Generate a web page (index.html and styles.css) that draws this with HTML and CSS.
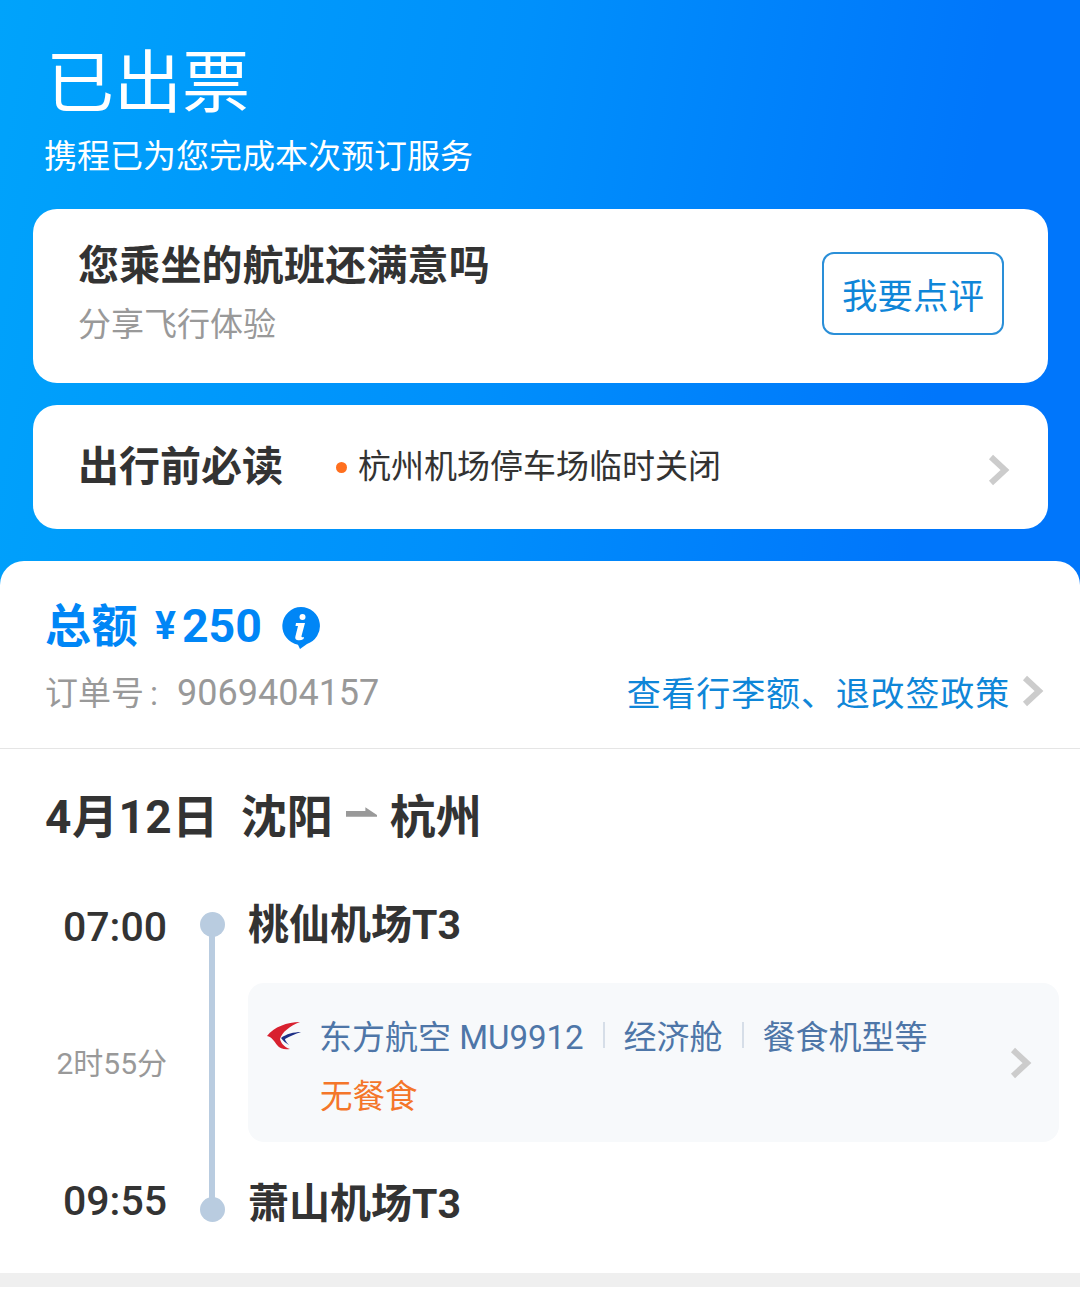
FILE: index.html
```html
<!DOCTYPE html>
<html lang="zh-CN">
<head>
<meta charset="utf-8">
<title>已出票</title>
<link rel="stylesheet" href="styles.css">
</head>
<body>
<header class="hero">
  <h1 class="hero-title">已出票</h1>
  <p class="hero-sub">携程已为您完成本次预订服务</p>
  <section class="card review">
    <div class="review-copy">
      <h2 class="review-title">您乘坐的航班还满意吗</h2>
      <p class="review-sub">分享飞行体验</p>
    </div>
    <button class="review-btn">我要点评</button>
  </section>
  <section class="card notice">
    <h2 class="notice-title">出行前必读</h2>
    <span class="notice-dot"></span>
    <span class="notice-text">杭州机场停车场临时关闭</span>
    <svg class="chev notice-chev" viewBox="0 0 22 32"><path d="M3 3l14 13L3 29"/></svg>
  </section>
</header>
<main class="sheet">
  <section class="summary">
    <div class="total">
      <span class="total-label">总额</span>
      <span class="total-yen">¥</span>
      <span class="total-num">250</span>
      <svg class="info" viewBox="0 0 38 42"><path class="info-bg" d="M19 0a19 19 0 0 1 6 37l-7 5-2-4.300A19 19 0 0 1 19 0z"/><circle class="info-fg" cx="20.500" cy="10" r="3"/><path class="info-fg" d="M14 16h9l-3.500 13q-.5 2 2.500 1l-.5 2q-3 2-6.500 1-2.500-1-1.500-4l2.500-10h-2.500z"/></svg>
    </div>
    <div class="order-row">
      <span class="order-no">订单号<span class="order-colon">:</span><span class="order-digits">9069404157</span></span>
      <span class="policy">查看行李额、退改签政策<svg class="chev policy-chev" viewBox="0 0 22 32"><path d="M3 3l14 13L3 29"/></svg></span>
    </div>
  </section>
  <section class="trip">
    <h2 class="trip-head">
      <span class="trip-date">4月12日</span><span class="route">沈阳</span>
      <svg class="route-arrow" viewBox="0 0 32 10"><path d="M0 4h20V0l12 8v2H0z"/></svg>
      <span>杭州</span>
    </h2>
    <div class="timeline">
      <div class="times">
        <span class="time">07:00</span>
        <span class="duration">2时55分</span>
        <span class="time">09:55</span>
      </div>
      <div class="rail"><i class="rail-dot"></i><i class="rail-line"></i><i class="rail-dot"></i></div>
      <div class="stops">
        <div class="airport">桃仙机场T3</div>
        <div class="flight">
          <svg class="logo" viewBox="0 0 34 28">
            <path fill="#d8212f" d="M33 0C20 0 7 5 0 14c5 1 7 5 10 9 3 4 8 5 13 4-6-2-9-6-10-10C15 10 23 4 33 0z"/>
            <path fill="#1d2f86" d="M34 10c-7 0-15 2-20 6 2 3 5 5 8 7-3-3-4-5-4-6 5-3 10-5 16-7z"/>
          </svg>
          <div class="flight-body">
            <div class="flight-line">
              <span>东方航空 MU9912</span><i class="sep"></i><span>经济舱</span><i class="sep"></i><span>餐食机型等</span>
            </div>
            <div class="meal">无餐食</div>
          </div>
          <svg class="chev flight-chev" viewBox="0 0 22 32"><path d="M3 3l14 13L3 29"/></svg>
        </div>
        <div class="airport">萧山机场T3</div>
      </div>
    </div>
  </section>
  <div class="divider"></div>
</main>
</body>
</html>
```

FILE: styles.css
```css
* { box-sizing: border-box; }
html, body { margin: 0; padding: 0; }
body {
  width: 1080px;
  height: 1303px;
  overflow: hidden;
  background: #fff;
  font-family: Roboto, "Noto Sans CJK SC", sans-serif;
  color: #333;
}
h1, h2, p { margin: 0; }

.hero {
  height: 590px;
  padding: 44px 32px 0 33px;
  background: linear-gradient(100deg, #00a3fb 0%, #0090fb 45%, #0076fb 85%, #0076fb 100%);
}
.hero-title {
  margin-left: 13px;
  font-size: 68px;
  line-height: 80px;
  font-weight: 400;
  color: #fff;
}
.hero-sub {
  margin: 11px 0 0 11px;
  font-size: 33px;
  line-height: 44px;
  color: #fff;
}
.card {
  width: 1015px;
  background: #fff;
  border-radius: 24px;
  display: flex;
  align-items: center;
}
.review {
  margin-top: 30px;
  height: 174px;
  padding: 0 44px 0 45px;
  justify-content: space-between;
}
.review-copy { margin-bottom: 8px; }
.review-title { font-size: 41px; letter-spacing: .2px; line-height: 56px; font-weight: 700; }
.review-sub { margin-top: 9px; font-size: 33px; line-height: 44px; color: #999; }
.review-btn {
  width: 182px;
  height: 83px;
  margin-bottom: 5px;
  padding: 0;
  background: #fff;
  border: 2px solid #2a8fd8;
  border-radius: 12px;
  color: #0f86d8;
  font: 35.500px/1 "Noto Sans CJK SC", sans-serif;
}
.notice {
  margin-top: 22px;
  height: 124px;
  padding: 0 38px 0 45px;
}
.notice-title { font-size: 41px; line-height: 56px; font-weight: 700; }
.notice-dot {
  width: 11px;
  height: 11px;
  margin: 0 11px 0 53px;
  border-radius: 50%;
  background: #ff6f1e;
}
.notice-text { font-size: 33px; line-height: 44px; color: #333; }
.chev { fill: none; stroke: #ccc; stroke-width: 6; flex: none; }
.notice-chev { width: 22px; height: 32px; margin-left: auto; margin-top: 6px; }

.sheet {
  margin-top: -29px;
  position: relative;
  background: #fff;
  border-radius: 24px 24px 0 0;
}
.summary {
  height: 188px;
  padding: 36px 36px 0 45px;
  border-bottom: 1px solid #e5e5e5;
}
.total {
  display: flex;
  align-items: center;
  height: 58px;
  color: #0086f6;
  font-weight: 700;
}
.total-label { font-size: 46px; letter-spacing: .5px; line-height: 58px; }
.total-yen { margin-left: 17px; font-size: 39px; }
.total-num { margin-left: 6px; font-size: 46.500px; }
.info { width: 38px; height: 42px; margin: 4px 0 0 20px; }
.info-bg { fill: #0086f6; }
.info-fg { fill: #fff; }
.order-row {
  display: flex;
  justify-content: space-between;
  align-items: center;
  margin-top: 14px;
  height: 44px;
}
.order-no { font-size: 33px; color: #999; }
.order-colon { margin-left: 6px; }
.order-digits { margin-left: 19px; font-size: 36px; }
.policy { display: flex; align-items: center; font-size: 34px; color: #0f86d8; letter-spacing: .85px; }
.policy-chev { width: 22px; height: 32px; margin-left: 12px; }

.trip { padding: 0 21px 0 45px; }
.trip-head {
  display: flex;
  align-items: center;
  margin-top: 36px;
  height: 56px;
  font-size: 46px;
  font-weight: 700;
}
.trip-date { letter-spacing: .5px; }
.route { margin-left: 22px; }
.route-arrow { width: 31px; height: 10px; margin: 0 13px; fill: #999; transform: translateY(-1px); }
.timeline {
  display: flex;
  margin-top: 63px;
}
.times {
  width: 122px;
  height: 320px;
  display: flex;
  flex-direction: column;
  justify-content: space-between;
  align-items: flex-end;
}
.time { font-size: 41px; line-height: 46px; font-weight: 500; }
.duration { font-size: 30px; line-height: 36px; color: #999; }
.rail {
  width: 26px;
  margin: 8px 0 0 32px;
  height: 310px;
  display: flex;
  flex-direction: column;
  align-items: center;
}
.rail-dot { flex: none; width: 25px; height: 25px; border-radius: 50%; background: #b9cce0; }
.rail-line { flex: 1; width: 6px; margin: -2px 0; background: #b9cce0; }
.stops { width: 811px; margin: -2px 0 0 23px; }
.airport { font-size: 41px; line-height: 46px; font-weight: 700; }
.flight {
  display: flex;
  margin: 35px 0 39px;
  height: 159px;
  padding: 28px 27px 0 19px;
  background: #f7f9fb;
  border-radius: 16px;
}
.logo { flex: none; width: 34px; height: 28px; margin-top: 11px; }
.flight-body { margin-left: 18px; }
.flight-line {
  display: flex;
  align-items: center;
  height: 48px;
  font-size: 33px;
  color: #4e76a8;
}
.sep { width: 2px; height: 26px; margin: 0 19px; background: #d6dee8; }
.meal { margin: 14px 0 0 1px; font-size: 32.500px; line-height: 48px; color: #f4762a; }
.flight-chev { width: 22px; height: 32px; margin: 36px 0 0 auto; }
.divider { height: 14px; margin-top: 46px; background: #efefef; }
```
